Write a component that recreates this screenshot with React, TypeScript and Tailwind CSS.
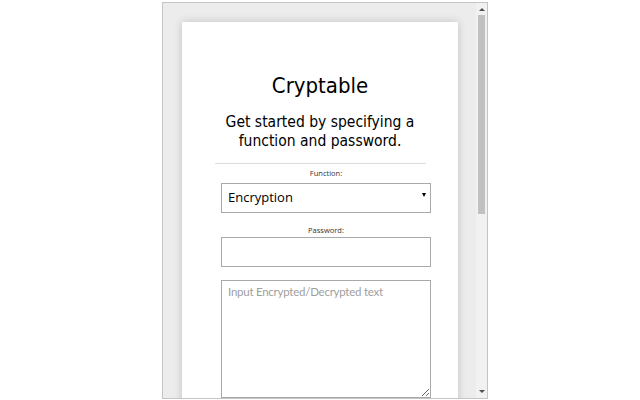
import { useState } from 'react';

const font = { fontFamily: '"Open Sans", "Noto Sans", sans-serif' };
const headFont = { fontFamily: '"DejaVu Sans Condensed", "Open Sans", sans-serif', fontStretch: 'condensed' };
const fieldFont = { fontFamily: 'Lato, "Open Sans", sans-serif' };

export default function App() {
    const [mode, setMode] = useState('encrypt');
    const [password, setPassword] = useState('');
    const [text, setText] = useState('');

    return (
        <div className="h-[400px] w-[640px] overflow-hidden bg-white pt-[2px] pl-[162px]" style={font}>
            <div className="flex h-[397px] w-[326px] overflow-hidden border border-[#c4c4c4] bg-[#ececec]">
                <div className="flex-1 overflow-hidden pt-[19px] pr-[18px] pl-[19px]">
                    <div className="h-[400px] bg-white shadow-[0_0_8px_rgba(0,0,0,0.18)]">
                        <h1 className="pt-[49px] text-center text-[22px] leading-[30px] text-black" style={headFont}>
                            Cryptable
                        </h1>
                        <p className="mt-[12px] text-center text-[15.5px] leading-[19px] text-black" style={headFont}>
                            Get started by specifying a
                            <br />
                            function and password.
                        </p>
                        <div className="mt-[12px] ml-[33px] h-px w-[211px] bg-[#dcdcdc]" />

                        <div className="ml-[39px] w-[210px]">
                            <label className="mt-[4px] block text-center text-[7.5px] leading-[10px] text-[#333]">Function:</label>
                            <div className="relative mt-[5px]">
                                <select
                                    value={mode}
                                    onChange={(e) => setMode(e.target.value)}
                                    className="block h-[30px] w-[210px] appearance-none border border-[#a9a9a9] bg-white pl-[6px] text-[13px] text-black outline-none"
                                >
                                    <option value="encrypt">Encryption</option>
                                    <option value="decrypt">Decryption</option>
                                </select>
                                <span className="pointer-events-none absolute top-[10px] right-[5px] h-0 w-0 border-x-[2.5px] border-t-[4px] border-x-transparent border-t-black" />
                            </div>

                            <label className="mt-[12px] block text-center text-[7.5px] leading-[10px] text-[#333]">Password:</label>
                            <input
                                type="password"
                                value={password}
                                onChange={(e) => setPassword(e.target.value)}
                                className="mt-[2px] block h-[30px] w-[210px] border border-[#a9a9a9] bg-white px-[6px] text-[13px] outline-none"
                            />

                            <textarea
                                value={text}
                                onChange={(e) => setText(e.target.value)}
                                placeholder="Input Encrypted/Decrypted text"
                                style={fieldFont}
                                className="mt-[13px] block h-[118px] w-[210px] border border-[#a9a9a9] bg-white px-[6px] py-[3px] text-[11.5px] leading-[15px] tracking-[-0.25px] text-black outline-none placeholder:text-[#a0a0a0]"
                            />
                        </div>
                    </div>
                </div>

                <div className="flex w-[11px] flex-col bg-[#f1f1f1]">
                    <div className="flex h-[12px] items-center justify-center">
                        <span className="h-0 w-0 border-x-[3px] border-b-[3px] border-x-transparent border-b-[#505050]" />
                    </div>
                    <div className="mx-[2px] h-[199px] bg-[#c1c1c1]" />
                    <div className="flex-1" />
                    <div className="flex h-[14px] items-center justify-center">
                        <span className="h-0 w-0 border-x-[3px] border-t-[3px] border-x-transparent border-t-[#505050]" />
                    </div>
                </div>
            </div>
        </div>
    );
}
